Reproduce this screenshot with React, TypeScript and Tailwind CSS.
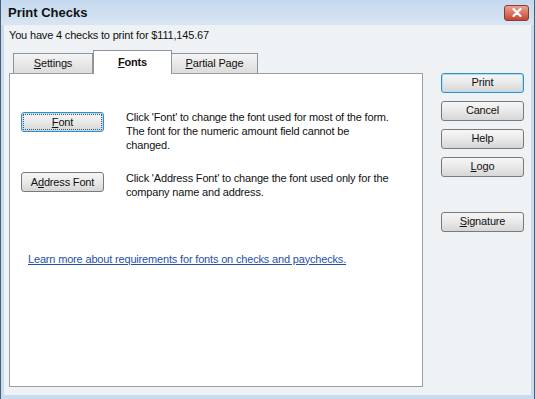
import React from 'react';

const font = { fontFamily: '"Liberation Sans", Arial, sans-serif' };

const Btn = ({ children, focused = false, className = '' }: { children: React.ReactNode; focused?: boolean; className?: string }) => (
  <div
    className={`flex h-[20px] w-[83px] items-center justify-center rounded-[3px] border bg-gradient-to-b from-[#f6f6f6] via-[#e9e9e9] to-[#d6d6d6] text-[11px] text-[#111] ${
      focused ? 'border-[#3c8cc4] shadow-[inset_0_0_0_1px_#a8e0f8]' : 'border-[#7a7a7a]'
    } ${className}`}
  >
    {children}
  </div>
);

export default function App() {
  return (
    <div style={font} className="flex h-[399px] w-[535px] flex-col overflow-hidden border-l border-r border-[#4a5d73] bg-[#c9dbee] tracking-[-0.17px]">
      {/* title bar */}
      <div className="flex h-[25px] shrink-0 items-center justify-between bg-gradient-to-b from-[#c4d8ee] to-[#d8e5f3] pl-[7px] pr-[5px]">
        <span className="text-[13px] font-bold tracking-normal text-[#111]">Print Checks</span>
        <div className="flex h-[16px] w-[25px] items-center justify-center rounded-[3px] border border-[#8a3b2e] bg-gradient-to-b from-[#e9a294] to-[#c5432f]">
          <svg width="10" height="9" viewBox="0 0 10 9">
            <path d="M1.5 1 L8.5 8 M8.5 1 L1.5 8" stroke="#fff" strokeWidth="2.2" strokeLinecap="round" />
          </svg>
        </div>
      </div>

      {/* body */}
      <div className="mx-[3px] mb-[4px] flex flex-1 flex-col bg-[#eef2f5] px-[5px]">
        <div className="pt-[2px] text-[11px] text-[#111]">You have 4 checks to print for $111,145.67</div>

        <div className="mt-[6px] flex flex-1 gap-[18px] pb-[8px]">
          {/* tabs + panel */}
          <div className="flex w-[414px] flex-col">
            <div className="flex h-[23px] items-end pl-[4px] text-[11px] text-[#111]">
              <div className="flex h-[20px] w-[80px] items-center justify-center border border-b-0 border-[#8e959c] bg-gradient-to-b from-[#f4f4f4] to-[#dcdcdc]">
                <span><u>S</u>ettings</span>
              </div>
              <div className="relative z-10 -mb-px flex h-[24px] w-[79px] items-center justify-center border border-b-0 border-[#8e959c] bg-white font-bold">
                <span><u>F</u>onts</span>
              </div>
              <div className="flex h-[20px] w-[86px] items-center justify-center border border-b-0 border-l-0 border-[#8e959c] bg-gradient-to-b from-[#f4f4f4] to-[#dcdcdc]">
                <span><u>P</u>artial Page</span>
              </div>
            </div>
            <div className="flex flex-1 flex-col border border-[#9a9fa4] bg-white pl-[11px] pt-[38px] text-[11px] leading-[14px] text-[#111]">
              <div className="flex gap-[22px]">
                <Btn focused>
                  <span className="flex h-[16px] w-[79px] items-center justify-center border border-dotted border-[#555]">
                    <span><u>F</u>ont</span>
                  </span>
                </Btn>
                <div className="-mt-[2px]">
                  Click 'Font' to change the font used for most of the form.
                  <br />
                  The font for the numeric amount field cannot be
                  <br />
                  changed.
                </div>
              </div>
              <div className="mt-[20px] flex gap-[22px]">
                <Btn>
                  <span>A<u>d</u>dress Font</span>
                </Btn>
                <div className="-mt-[1px]">
                  Click 'Address Font' to change the font used only for the
                  <br />
                  company name and address.
                </div>
              </div>
              <div className="mt-[53px] pl-[7px] text-[#1f4fa8] underline">
                Learn more about requirements for fonts on checks and paychecks.
              </div>
            </div>
          </div>

          {/* right buttons */}
          <div className="flex flex-col gap-[8px] pt-[23px]">
            <Btn focused>Print</Btn>
            <Btn>Cancel</Btn>
            <Btn>Help</Btn>
            <Btn>
              <span><u>L</u>ogo</span>
            </Btn>
            <Btn className="mt-[27px]">
              <span><u>S</u>ignature</span>
            </Btn>
          </div>
        </div>
      </div>
    </div>
  );
}
